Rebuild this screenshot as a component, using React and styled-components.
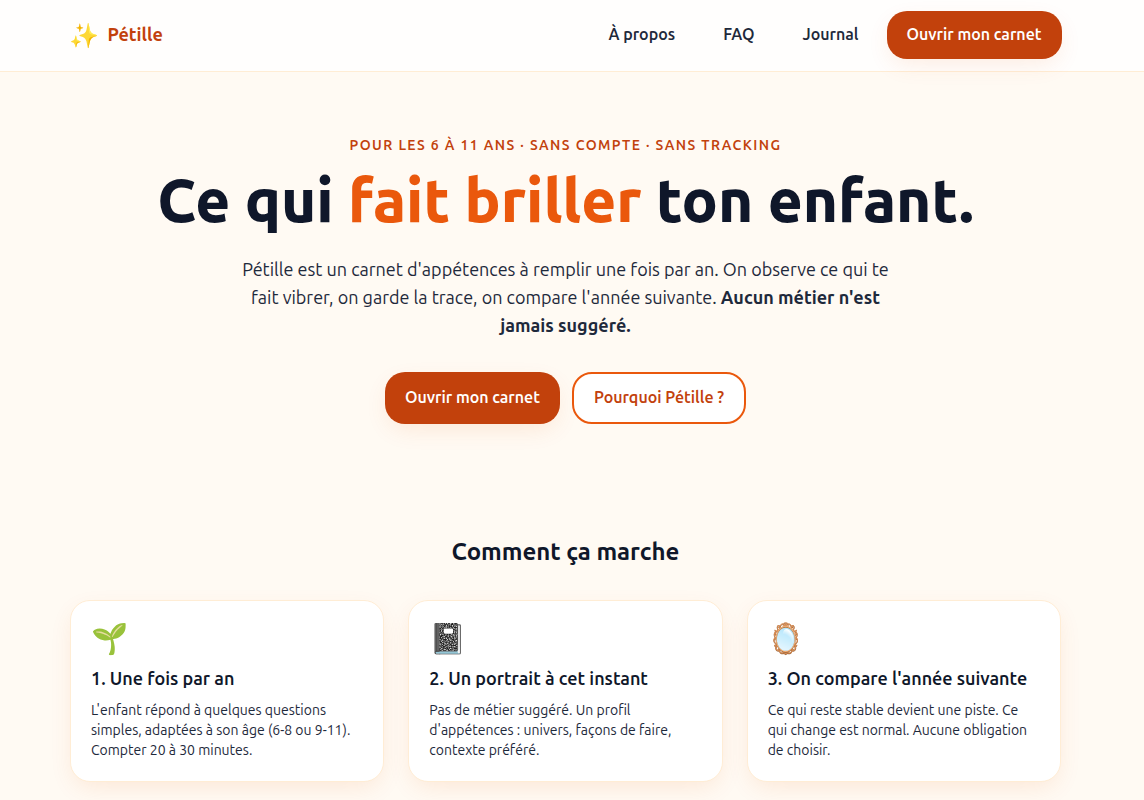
import React from 'react';
import styled, { createGlobalStyle } from 'styled-components';

const GlobalStyle = createGlobalStyle`
  * {
    box-sizing: border-box;
  }

  body {
    margin: 0;
    background: #fffaf3;
    color: #1e293b;
    font-family: 'Ubuntu Sans', Ubuntu, 'Noto Sans', 'Noto Color Emoji', sans-serif;
    font-size: 16px;
    line-height: 24px;
  }
`;

const Header = styled.header`
  padding: 11px 29px 12px 16px;
  background: #fffefd;
  border-bottom: 1px solid #ffedd5;
`;

const HeaderInner = styled.div`
  display: flex;
  align-items: center;
  justify-content: space-between;
  max-width: 992px;
  margin: 0 auto;
`;

const Brand = styled.a`
  display: flex;
  align-items: center;
  gap: 8px;
  color: #c2410c;
  font-size: 18px;
  line-height: 28px;
  font-weight: 700;
  text-decoration: none;
`;

const BrandIcon = styled.span`
  padding-top: 2px;
  font-size: 24px;
  line-height: 32px;
`;

const Nav = styled.nav`
  display: flex;
  align-items: center;
  gap: 8px;
`;

const NavLink = styled.a`
  padding: 12px 20px;
  color: #1e293b;
  font-weight: 600;
  text-decoration: none;
`;

const ButtonLink = styled.a`
  display: inline-flex;
  align-items: center;
  justify-content: center;
  padding: 12px 20px;
  border-radius: 20px;
  background: #c2410c;
  color: #fff;
  box-shadow: 0 8px 24px -4px rgba(234, 88, 12, 0.12);
  font-weight: 600;
  text-decoration: none;
`;

const OutlineLink = styled(ButtonLink)`
  background: #fff;
  color: #c2410c;
  border: 2px solid #ea580c;
  box-shadow: none;
`;

const Main = styled.main`
  padding: 64px 30px 64px 17px;
`;

const Hero = styled.section`
  display: flex;
  flex-direction: column;
  align-items: center;
  text-align: center;
`;

const Eyebrow = styled.p`
  margin: 0;
  color: #c2410c;
  font-size: 14px;
  line-height: 20px;
  font-weight: 600;
  letter-spacing: 1.4px;
  text-transform: uppercase;
`;

const Title = styled.h1`
  margin: 12px 0 0;
  color: #0f172a;
  font-size: 60px;
  line-height: 68px;
  font-weight: 800;
`;

const Accent = styled.span`
  color: #ea580c;
`;

const Lead = styled.p`
  max-width: 672px;
  margin: 20px 0 0;
  font-size: 18px;
  line-height: 28px;
`;

const Actions = styled.div`
  display: flex;
  gap: 12px;
  margin-top: 32px;
`;

const Steps = styled.section`
  max-width: 991px;
  margin: 112px auto 0;
`;

const StepsTitle = styled.h2`
  margin: 0;
  color: #0f172a;
  font-size: 24px;
  line-height: 32px;
  font-weight: 700;
  text-align: center;
`;

const StepGrid = styled.div`
  display: grid;
  grid-template-columns: repeat(3, 1fr);
  gap: 24px;
  margin-top: 32px;
`;

const Card = styled.article`
  padding: 20px;
  background: #fff;
  border: 1px solid #ffedd5;
  border-radius: 20px;
  box-shadow: 0 8px 24px -4px rgba(234, 88, 12, 0.12);
`;

const CardIcon = styled.div`
  font-size: 30px;
  line-height: 36px;
`;

const CardTitle = styled.h3`
  margin: 8px 0 0;
  color: #0f172a;
  font-size: 18px;
  line-height: 28px;
  font-weight: 600;
`;

const CardText = styled.p`
  margin: 8px 0 0;
  font-size: 14px;
  line-height: 20px;
`;

const steps = [
  {
    icon: '🌱',
    title: '1. Une fois par an',
    text: "L'enfant répond à quelques questions simples, adaptées à son âge (6-8 ou 9-11). Compter 20 à 30 minutes.",
  },
  {
    icon: '📓',
    title: '2. Un portrait à cet instant',
    text: "Pas de métier suggéré. Un profil d'appétences : univers, façons de faire, contexte préféré.",
  },
  {
    icon: '🪞',
    title: "3. On compare l'année suivante",
    text: 'Ce qui reste stable devient une piste. Ce qui change est normal. Aucune obligation de choisir.',
  },
];

const App = () => (
  <>
    <GlobalStyle />
    <Header>
      <HeaderInner>
        <Brand href="#">
          <BrandIcon aria-hidden="true">✨</BrandIcon>
          Pétille
        </Brand>
        <Nav>
          <NavLink href="#a-propos">À propos</NavLink>
          <NavLink href="#faq">FAQ</NavLink>
          <NavLink href="#journal">Journal</NavLink>
          <ButtonLink href="#carnet">Ouvrir mon carnet</ButtonLink>
        </Nav>
      </HeaderInner>
    </Header>
    <Main>
      <Hero>
        <Eyebrow>Pour les 6 à 11 ans · Sans compte · Sans tracking</Eyebrow>
        <Title>
          Ce qui <Accent>fait briller</Accent> ton enfant.
        </Title>
        <Lead>
          Pétille est un carnet d'appétences à remplir une fois par an. On observe ce qui te fait
          vibrer, on garde la trace, on compare l'année suivante.{' '}
          <strong>Aucun métier n'est jamais suggéré.</strong>
        </Lead>
        <Actions>
          <ButtonLink href="#carnet">Ouvrir mon carnet</ButtonLink>
          <OutlineLink href="#pourquoi">Pourquoi Pétille ?</OutlineLink>
        </Actions>
      </Hero>
      <Steps>
        <StepsTitle>Comment ça marche</StepsTitle>
        <StepGrid>
          {steps.map(({ icon, title, text }) => (
            <Card key={title}>
              <CardIcon aria-hidden="true">{icon}</CardIcon>
              <CardTitle>{title}</CardTitle>
              <CardText>{text}</CardText>
            </Card>
          ))}
        </StepGrid>
      </Steps>
    </Main>
  </>
);

export default App;
